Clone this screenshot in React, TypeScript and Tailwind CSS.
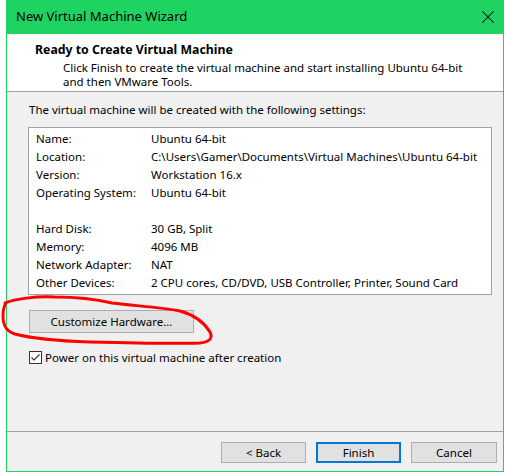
import { X } from "lucide-react";

const FONT = "font-['Segoe_UI','Noto_Sans','Open_Sans',sans-serif]";

const ROWS: [string, string][] = [
  ["Name:", "Ubuntu 64-bit"],
  ["Location:", "C:\\Users\\Gamer\\Documents\\Virtual Machines\\Ubuntu 64-bit"],
  ["Version:", "Workstation 16.x"],
  ["Operating System:", "Ubuntu 64-bit"],
  ["", ""],
  ["Hard Disk:", "30 GB, Split"],
  ["Memory:", "4096 MB"],
  ["Network Adapter:", "NAT"],
  ["Other Devices:", "2 CPU cores, CD/DVD, USB Controller, Printer, Sound Card"],
];

function WinButton({
  label,
  primary,
  className,
}: {
  label: string;
  primary?: boolean;
  className?: string;
}) {
  return (
    <button
      className={`flex items-center justify-center bg-[#e1e1e1] text-[11.5px] text-black ${
        primary ? "border-2 border-[#0078d7]" : "border border-[#adadad]"
      } ${className ?? ""}`}
    >
      {label}
    </button>
  );
}

export default function App() {
  return (
    <div className={`relative w-[505px] h-[472px] bg-white pl-[6px] pr-px ${FONT}`}>
      <div className="flex flex-col h-full border-x border-b border-[#1fd363]">
        {/* Title bar */}
        <div className="flex items-center justify-between h-[34px] bg-[#1fd363] -mx-px pl-[10px] pr-[5px]">
          <span className="text-[13px] text-black">New Virtual Machine Wizard</span>
          <X className="w-[22px] h-[22px] text-black" strokeWidth={1.1} />
        </div>

        {/* Header */}
        <div className="h-[58px] bg-white border-b border-[#a0a0a0] pt-[8px]">
          <p className="pl-[28px] text-[12.3px] font-bold leading-[16px] text-black">
            Ready to Create Virtual Machine
          </p>
          <p className="pl-[56px] pt-[3px] text-[11.5px] leading-[14px] text-black">
            Click Finish to create the virtual machine and start installing Ubuntu 64-bit
            <br />
            and then VMware Tools.
          </p>
        </div>

        {/* Body */}
        <div className="flex flex-col flex-1 bg-[#f0f0f0]">
          <p className="pl-[22px] pt-[10px] text-[11.5px] leading-[16px] text-black">
            The virtual machine will be created with the following settings:
          </p>

          <div className="mt-[9px] ml-[21px] mr-[11px] h-[168px] bg-white border border-[#a0a0a0] pl-[7px] pt-[2px]">
            {ROWS.map(([k, v], i) => (
              <div key={i} className="flex h-[18px] items-center text-[11.5px] text-black whitespace-nowrap">
                <span className="w-[115px] shrink-0">{k}</span>
                <span>{v}</span>
              </div>
            ))}
          </div>

          <WinButton label="Customize Hardware..." className="mt-[15px] ml-[22px] w-[165px] h-[23px]" />

          <label className="flex items-center gap-[3px] mt-[18px] ml-[22px] h-[13px] leading-[13px] text-[11.5px] text-black">
            <span className="flex items-center justify-center w-[13px] h-[13px] border border-[#333] bg-white">
              <svg viewBox="0 0 11 11" className="w-[11px] h-[11px]">
                <path d="M1.5 5.5 L4 8 L9.5 2.5" fill="none" stroke="#333" strokeWidth="1.2" />
              </svg>
            </span>
            Power on this virtual machine after creation
          </label>

          <div className="flex-1" />

          <div className="border-t border-[#a0a0a0] h-[40px] flex items-start justify-end gap-[10px] pt-[10px] pr-[6px]">
            <WinButton label="< Back" className="w-[85px] h-[21px]" />
            <WinButton label="Finish" primary className="w-[85px] h-[21px]" />
            <WinButton label="Cancel" className="w-[86px] h-[21px]" />
          </div>
        </div>
      </div>

      {/* Red hand-drawn annotation */}
      <svg className="absolute left-0 top-0 pointer-events-none" width="505" height="472">
        <path
          d="M5 303 C 15 299, 35 296, 55 297 C 75 297, 95 299, 112 303 C 135 306, 160 307, 180 311 C 195 315, 205 324, 210 332 C 213 338, 210 342, 200 343 C 170 344, 130 343, 90 342 C 60 341, 30 338, 15 334 C 5 331, 3 324, 3 316 C 3 310, 4 306, 6 303"
          fill="none"
          stroke="#ff0000"
          strokeWidth="3"
          strokeLinecap="round"
        />
      </svg>
    </div>
  );
}
